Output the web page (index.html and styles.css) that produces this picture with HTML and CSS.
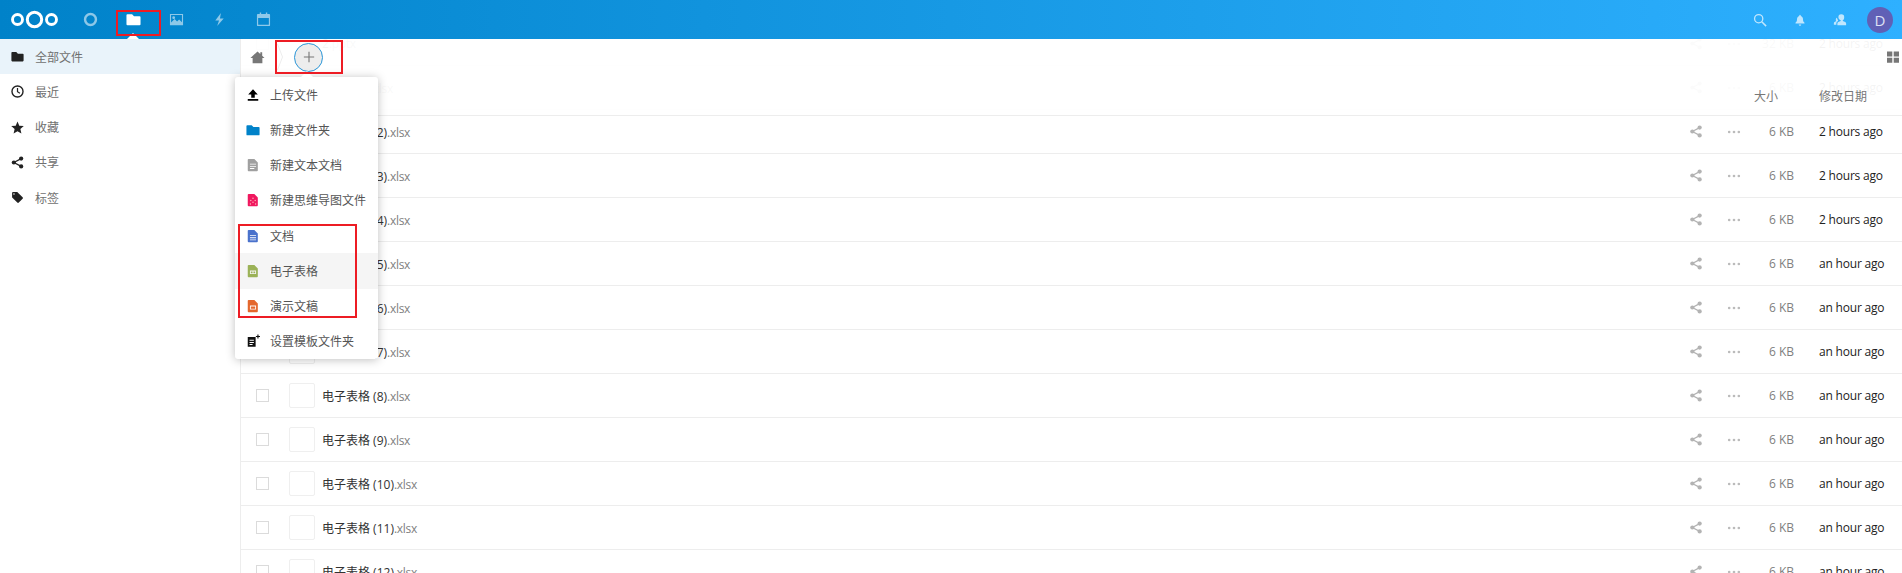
FILE: index.html
```html
<!DOCTYPE html>
<html lang="zh-CN">

<head>
    <meta charset="UTF-8">
    <title>文件</title>
    <link rel="stylesheet" href="styles.css">
</head>

<body>
    <!-- Ikone koje se ponavljaju -->
    <svg class="sprite" aria-hidden="true">
        <symbol id="i-share" viewBox="0 0 16 16">
            <circle cx="3.5" cy="8" r="2.6" />
            <circle cx="12.5" cy="3.2" r="2.6" />
            <circle cx="12.5" cy="12.8" r="2.6" />
            <path d="M3.5 8l9-4.8M3.5 8l9 4.8" fill="none" stroke="currentColor" stroke-width="1.6" />
        </symbol>
        <symbol id="i-dots" viewBox="0 0 16 16">
            <circle cx="2.500" cy="8" r="1.500" />
            <circle cx="8" cy="8" r="1.500" />
            <circle cx="13.500" cy="8" r="1.500" />
        </symbol>
        <symbol id="i-folder" viewBox="0 0 16 16">
            <path d="M1.5 2.5h5l2 2h6a1 1 0 0 1 1 1v7.500a1 1 0 0 1-1 1h-13a1 1 0 0 1-1-1v-9.500a1 1 0 0 1 1-1z" />
        </symbol>
    </svg>

    <header class="topbar">
        <svg class="logo" viewBox="0 0 47 19" width="47" height="19">
            <g fill="none" stroke="#fff">
                <circle cx="6.500" cy="9.500" r="5" stroke-width="2.900" />
                <circle cx="23.500" cy="9.500" r="7.200" stroke-width="3" />
                <circle cx="40.500" cy="9.500" r="5" stroke-width="2.900" />
            </g>
        </svg>
        <nav class="apps">
            <a class="app dim">
                <svg viewBox="0 0 16 16" width="15" height="15"><circle cx="8" cy="8" r="5.800" fill="none" stroke="#fff" stroke-width="2.600" /></svg>
            </a>
            <a class="app active">
                <svg width="15" height="15" fill="#fff"><use href="#i-folder" /></svg>
            </a>
            <a class="app dim">
                <svg viewBox="0 0 16 16" width="15" height="15"><path fill="#fff" fill-rule="evenodd" d="M1 2h14v12H1zM2.200 3.200v8l3.800-3.700 2.600 2.500 2.200-2 3 3V3.200zM5 4.500a1.500 1.500 0 1 1 0 3 1.500 1.500 0 0 1 0-3z" /></svg>
            </a>
            <a class="app dim">
                <svg viewBox="0 0 16 16" width="15" height="15"><path fill="#fff" d="M9.500 1L3.500 9h4L5.500 15l7-8H8.500z" /></svg>
            </a>
            <a class="app dim">
                <svg viewBox="0 0 16 16" width="15" height="15"><path fill="#fff" fill-rule="evenodd" d="M4 .500h1.500V2h5V.500H12V2h2a1 1 0 0 1 1 1v11a1 1 0 0 1-1 1H2a1 1 0 0 1-1-1V3a1 1 0 0 1 1-1h2zM2.300 6.500V13a.7.7 0 0 0 .7.700h10a.7.7 0 0 0 .7-.7V6.500z" /></svg>
            </a>
        </nav>
        <div class="top-right">
            <a class="top-icon">
                <svg viewBox="0 0 16 16" width="14" height="14"><circle cx="6.500" cy="6.500" r="4.700" fill="none" stroke="#fff" stroke-width="1.500" /><path d="M10 10l5 5" stroke="#fff" stroke-width="1.700" /></svg>
            </a>
            <a class="top-icon">
                <svg viewBox="0 0 16 16" width="12" height="12"><path fill="#fff" d="M8 1a1 1 0 0 1 1 1v.600c2 .5 3 2.200 3 4.400 0 2.500.7 3.600 2 4.500v1H2v-1c1.300-.9 2-2 2-4.500 0-2.200 1-3.900 3-4.400V2a1 1 0 0 1 1-1zM6.300 14h3.400a1.700 1.700 0 0 1-3.400 0z" /></svg>
            </a>
            <a class="top-icon">
                <svg viewBox="0 0 16 16" width="14" height="14"><path fill="#fff" d="M9.500 1.500a3.300 3.300 0 0 1 3.300 3.500c0 1.400-.7 2.800-1.600 3.400v.8c2 .5 3.800 1.300 3.800 2.800V14H5v-2c0-1.500 1.800-2.300 3.800-2.800v-.8C7.900 7.800 6.200 6.400 6.200 5a3.300 3.300 0 0 1 3.300-3.500zM1 13.500v-1.800c0-1.200 1.100-1.800 2.700-2.300-.6-.8-.7-2-.2-3 .3-.4.600-.7 1-.9.200 1 .7 2 1.300 2.700v.8C4.500 9.500 3.800 10.500 3.800 12v1.500z" /></svg>
            </a>
            <div class="avatar">D</div>
        </div>
    </header>

    <div class="main">
        <aside class="sidebar">
            <a class="side-item selected">
                <svg width="13" height="13" fill="#222"><use href="#i-folder" /></svg>
                <span>全部文件</span>
            </a>
            <a class="side-item">
                <svg viewBox="0 0 16 16" width="13" height="13"><circle cx="8" cy="8" r="6.800" fill="none" stroke="#222" stroke-width="1.700" /><path d="M8 3.800V8.300l3 1.800" fill="none" stroke="#222" stroke-width="1.500" /></svg>
                <span>最近</span>
            </a>
            <a class="side-item">
                <svg viewBox="0 0 24 24" width="13" height="13"><path fill="#222" d="M12 18.700l7.200 4.300-1.900-8.200L23.600 9.300l-8.300-.7L12 1 8.700 8.600l-8.300.7 6.300 5.500L4.800 23z" /></svg>
                <span>收藏</span>
            </a>
            <a class="side-item">
                <svg class="dark-share" width="13" height="13" fill="#222" color="#222"><use href="#i-share" /></svg>
                <span>共享</span>
            </a>
            <a class="side-item">
                <svg viewBox="0 0 24 24" width="13" height="13"><path fill="#222" d="M21.410 11.580l-9-9C12.050 2.220 11.550 2 11 2H4c-1.100 0-2 .9-2 2v7c0 .55.22 1.050.59 1.420l9 9c.36.36.86.58 1.410.58s1.050-.22 1.410-.59l7-7c.37-.36.59-.86.59-1.410s-.23-1.060-.59-1.420zM5.500 7C4.670 7 4 6.330 4 5.500S4.670 4 5.500 4 7 4.670 7 5.500 6.330 7 5.500 7z" /></svg>
                <span>标签</span>
            </a>
        </aside>

        <section class="files">
            <div class="file-list">
                <div class="file-row"><i class="check"></i><i class="thumb"></i><span class="name">2<em>.pptx</em></span><svg class="share"><use href="#i-share" /></svg><svg class="dots"><use href="#i-dots" /></svg><span class="size">32 KB</span><span class="date">2 hours ago</span></div>
                <div class="file-row"><i class="check"></i><i class="thumb"></i><span class="name">电子表格<em>.xlsx</em></span><svg class="share"><use href="#i-share" /></svg><svg class="dots"><use href="#i-dots" /></svg><span class="size">6 KB</span><span class="date">2 hours ago</span></div>
                <div class="file-row"><i class="check"></i><i class="thumb"></i><span class="name">电子表格 (2)<em>.xlsx</em></span><svg class="share"><use href="#i-share" /></svg><svg class="dots"><use href="#i-dots" /></svg><span class="size">6 KB</span><span class="date">2 hours ago</span></div>
                <div class="file-row"><i class="check"></i><i class="thumb"></i><span class="name">电子表格 (3)<em>.xlsx</em></span><svg class="share"><use href="#i-share" /></svg><svg class="dots"><use href="#i-dots" /></svg><span class="size">6 KB</span><span class="date">2 hours ago</span></div>
                <div class="file-row"><i class="check"></i><i class="thumb"></i><span class="name">电子表格 (4)<em>.xlsx</em></span><svg class="share"><use href="#i-share" /></svg><svg class="dots"><use href="#i-dots" /></svg><span class="size">6 KB</span><span class="date">2 hours ago</span></div>
                <div class="file-row"><i class="check"></i><i class="thumb"></i><span class="name">电子表格 (5)<em>.xlsx</em></span><svg class="share"><use href="#i-share" /></svg><svg class="dots"><use href="#i-dots" /></svg><span class="size">6 KB</span><span class="date">an hour ago</span></div>
                <div class="file-row"><i class="check"></i><i class="thumb"></i><span class="name">电子表格 (6)<em>.xlsx</em></span><svg class="share"><use href="#i-share" /></svg><svg class="dots"><use href="#i-dots" /></svg><span class="size">6 KB</span><span class="date">an hour ago</span></div>
                <div class="file-row"><i class="check"></i><i class="thumb"></i><span class="name">电子表格 (7)<em>.xlsx</em></span><svg class="share"><use href="#i-share" /></svg><svg class="dots"><use href="#i-dots" /></svg><span class="size">6 KB</span><span class="date">an hour ago</span></div>
                <div class="file-row"><i class="check"></i><i class="thumb"></i><span class="name">电子表格 (8)<em>.xlsx</em></span><svg class="share"><use href="#i-share" /></svg><svg class="dots"><use href="#i-dots" /></svg><span class="size">6 KB</span><span class="date">an hour ago</span></div>
                <div class="file-row"><i class="check"></i><i class="thumb"></i><span class="name">电子表格 (9)<em>.xlsx</em></span><svg class="share"><use href="#i-share" /></svg><svg class="dots"><use href="#i-dots" /></svg><span class="size">6 KB</span><span class="date">an hour ago</span></div>
                <div class="file-row"><i class="check"></i><i class="thumb"></i><span class="name">电子表格 (10)<em>.xlsx</em></span><svg class="share"><use href="#i-share" /></svg><svg class="dots"><use href="#i-dots" /></svg><span class="size">6 KB</span><span class="date">an hour ago</span></div>
                <div class="file-row"><i class="check"></i><i class="thumb"></i><span class="name">电子表格 (11)<em>.xlsx</em></span><svg class="share"><use href="#i-share" /></svg><svg class="dots"><use href="#i-dots" /></svg><span class="size">6 KB</span><span class="date">an hour ago</span></div>
                <div class="file-row"><i class="check"></i><i class="thumb"></i><span class="name">电子表格 (12)<em>.xlsx</em></span><svg class="share"><use href="#i-share" /></svg><svg class="dots"><use href="#i-dots" /></svg><span class="size">6 KB</span><span class="date">an hour ago</span></div>
            </div>

            <!-- Prozirna traka preko liste -->
            <div class="files-bar">
                <div class="crumbs">
                    <svg class="home" viewBox="0 0 16 16" width="15" height="15"><path fill="#777" d="M8 1.500L.5 8.500h2.300V14h10.400V8.500h2.300L13 6.200V2.500h-2v1.800z" /></svg>
                    <svg class="crumb-sep" viewBox="0 0 6 28" width="6" height="28"><path d="M.5 1l5 13-5 13" fill="none" stroke="#ededed" /></svg>
                    <div class="add-btn">
                        <svg viewBox="0 0 14 14" width="12" height="12"><path d="M7 1v12M1 7h12" stroke="#777" stroke-width="1.300" /></svg>
                    </div>
                    <svg class="view-toggle" viewBox="0 0 12 12" width="12" height="12"><path fill="#777" d="M0 .500h5.300v5H0zM6.700 .500H12v5H6.700zM0 6.800h5.300v5H0zM6.700 6.800H12v5H6.700z" /></svg>
                </div>
                <div class="list-head">
                    <span class="head-size">大小</span>
                    <span class="head-date">修改日期</span>
                </div>
            </div>

            <!-- Meni za novi fajl -->
            <div class="new-menu">
                <a class="menu-item">
                    <svg viewBox="0 0 16 16" width="14" height="14"><path fill="#000" d="M8 1.500l5.500 6H10v3.500H6V7.500H2.500zM2 12.500h12v2H2z" /></svg>
                    <span>上传文件</span>
                </a>
                <a class="menu-item">
                    <svg width="14" height="14" fill="#0082c9"><use href="#i-folder" /></svg>
                    <span>新建文件夹</span>
                </a>
                <a class="menu-item">
                    <svg viewBox="0 0 16 16" width="14" height="14"><path fill-rule="evenodd" fill="#a0a0a0" d="M3 1h6.500L13.500 5V14a1 1 0 0 1-1 1H3a1 1 0 0 1-1-1V2a1 1 0 0 1 1-1zM4.500 6.500v1h7v-1zM4.500 9v1h7V9zM4.500 11.500v1h5v-1z" /></svg>
                    <span>新建文本文档</span>
                </a>
                <a class="menu-item">
                    <svg viewBox="0 0 16 16" width="14" height="14"><path fill="#f0185f" d="M3 1h6.500L13.500 5V14a1 1 0 0 1-1 1H3a1 1 0 0 1-1-1V2a1 1 0 0 1 1-1z" /><g fill="#fbb"><circle cx="8" cy="6" r=".8" /><circle cx="5.500" cy="8.500" r=".8" /><circle cx="10.500" cy="8.500" r=".8" /><circle cx="8" cy="10.500" r=".8" /><circle cx="5" cy="12.500" r=".8" /><circle cx="11" cy="12.500" r=".8" /></g></svg>
                    <span>新建思维导图文件</span>
                </a>
                <a class="menu-item">
                    <svg viewBox="0 0 16 16" width="14" height="14"><path fill-rule="evenodd" fill="#4a72cc" d="M3 1h6.500L13.500 5V14a1 1 0 0 1-1 1H3a1 1 0 0 1-1-1V2a1 1 0 0 1 1-1zM4.500 7v1h7V7zM4.500 9.500v1h7v-1zM4.500 12v.8h7V12z" /></svg>
                    <span>文档</span>
                </a>
                <a class="menu-item hover">
                    <svg viewBox="0 0 16 16" width="14" height="14"><path fill-rule="evenodd" fill="#9bb257" d="M3 1h6.500L13.500 5V14a1 1 0 0 1-1 1H3a1 1 0 0 1-1-1V2a1 1 0 0 1 1-1zM4.500 7.500v4h7v-4zM5.500 8.500h2v2h-2zM8.500 8.500h2v2h-2z" /></svg>
                    <span>电子表格</span>
                </a>
                <a class="menu-item">
                    <svg viewBox="0 0 16 16" width="14" height="14"><path fill-rule="evenodd" fill="#e4672d" d="M3 1h6.500L13.500 5V14a1 1 0 0 1-1 1H3a1 1 0 0 1-1-1V2a1 1 0 0 1 1-1zM4.500 7.500v4.500h7V7.500zM5.500 8.500h5V11h-5z" /></svg>
                    <span>演示文稿</span>
                </a>
                <a class="menu-item">
                    <svg viewBox="0 0 16 16" width="14" height="14"><path fill-rule="evenodd" fill="#111" d="M2 3.500h9V14.500H2zM4 6.500v1.200h5V6.500zM4 9v1.200h5V9zM4 11.500v1.200h3.500v-1.200zM13 .5h1.300v1.700H16v1.300h-1.700v1.700H13V3.500h-1.700V2.200H13z" /></svg>
                    <span>设置模板文件夹</span>
                </a>
            </div>
        </section>
    </div>

    <!-- Crveni okviri sa snimka ekrana -->
    <div class="mark mark-files"></div>
    <div class="mark mark-add"></div>
    <div class="mark mark-office"></div>
</body>

</html>
```

FILE: styles.css
```css
* {
    box-sizing: border-box;
}

html,
body {
    height: 100%;
}

body {
    font-family: "Open Sans", "Noto Sans CJK SC", sans-serif;
    font-size: 12px;
    margin: 0;
    padding: 0;
    color: #222;
    background-color: #fff;
    overflow: hidden;
}

a {
    color: inherit;
    text-decoration: none;
}

.sprite {
    display: none;
}

.topbar {
    position: relative;
    z-index: 10;
    height: 39px;
    display: flex;
    align-items: center;
    background: linear-gradient(to right, #0082c9, #2eb0ff);
}

.logo {
    margin-left: 11px;
    flex-shrink: 0;
}

.apps {
    display: flex;
    margin-left: 10.4px;
}

.app {
    width: 43.25px;
    height: 39px;
    position: relative;
    display: flex;
    align-items: center;
    justify-content: center;
}

.app.dim {
    opacity: 0.55;
}

.app.active::after {
    content: "";
    position: absolute;
    left: 50%;
    bottom: 0;
    margin-left: -6px;
    border: 6px solid transparent;
    border-top: 0;
    border-bottom-color: #fff;
}

.top-right {
    margin-left: auto;
    display: flex;
    align-items: center;
    padding-right: 9px;
}

.top-icon {
    width: 40px;
    height: 39px;
    display: flex;
    align-items: center;
    justify-content: center;
    opacity: 0.7;
}

.avatar {
    width: 26px;
    height: 26px;
    margin-left: 7px;
    border-radius: 50%;
    background-color: #6060b6;
    color: #dfe0f5;
    font-size: 15px;
    line-height: 26px;
    text-align: center;
}

.main {
    height: calc(100vh - 39px);
    display: flex;
    overflow: hidden;
}

.sidebar {
    width: 241px;
    flex-shrink: 0;
    border-right: 1px solid #ededed;
}

.side-item {
    height: 35.25px;
    display: flex;
    align-items: center;
    padding-left: 11px;
    gap: 11px;
    color: #707070;
}

.side-item.selected {
    background-color: #e9f3fa;
}

.files {
    flex: 1;
    position: relative;
}

.file-list {
    margin-top: -17px;
}

.file-row {
    height: 44px;
    display: flex;
    align-items: center;
    border-bottom: 1px solid #ededed;
    padding-left: 15px;
}

.check {
    width: 13px;
    height: 13px;
    border: 1px solid #dbdbdb;
    flex-shrink: 0;
}

.thumb {
    width: 26px;
    height: 25px;
    margin-left: 20px;
    border: 1px solid #efefef;
    border-radius: 2px;
    flex-shrink: 0;
}

.name {
    flex: 1;
    margin-left: 7px;
    color: #333;
}

.name em {
    font-style: normal;
    color: #808080;
    letter-spacing: -0.3px;
}

.share {
    width: 38px;
    height: 13px;
    fill: #b3b3b3;
    color: #b3b3b3;
}

.dots {
    width: 38px;
    height: 14px;
    fill: #bbb;
}

.size {
    width: 41px;
    text-align: right;
    color: #808080;
}

.date {
    width: 83px;
    margin-left: 25px;
    color: #222;
    letter-spacing: -0.2px;
}

.files-bar {
    position: absolute;
    top: 0;
    left: 0;
    right: 0;
    height: 77px;
    background-color: rgba(255, 255, 255, 0.95);
    border-bottom: 1px solid #ededed;
    display: flex;
    flex-direction: column;
}

.crumbs {
    height: 36px;
    display: flex;
    align-items: center;
    padding-left: 9px;
}

.crumb-sep {
    margin-left: 12px;
}

.add-btn {
    width: 29px;
    height: 29px;
    margin-left: 11px;
    border: 1px solid #2a96d8;
    border-radius: 50%;
    background-color: #ededed;
    display: flex;
    align-items: center;
    justify-content: center;
}

.view-toggle {
    margin-left: auto;
    margin-right: 3px;
}

.list-head {
    flex: 1;
    display: flex;
    align-items: center;
    padding-top: 2px;
    color: #777;
}

.head-size {
    margin-left: auto;
}

.head-date {
    width: 83px;
    margin-left: 41px;
}

.new-menu {
    position: absolute;
    top: 38px;
    left: -6px;
    width: 143px;
    background-color: #fff;
    border-radius: 3px;
    box-shadow: 0 1px 10px rgba(0, 0, 0, 0.25);
    z-index: 5;
}

.new-menu::before {
    content: "";
    position: absolute;
    top: -6px;
    left: 66px;
    border: 6px solid transparent;
    border-top: 0;
    border-bottom-color: #fff;
}

.menu-item {
    height: 35.25px;
    display: flex;
    align-items: center;
    padding-left: 11px;
    gap: 10px;
    color: #555;
    white-space: nowrap;
}

.menu-item.hover {
    background-color: #f5f5f5;
}

.mark {
    position: absolute;
    z-index: 20;
    border: 2px solid #ed1c24;
}

.mark-files {
    left: 116px;
    top: 10px;
    width: 45px;
    height: 26px;
}

.mark-add {
    left: 275px;
    top: 40px;
    width: 68px;
    height: 34px;
}

.mark-office {
    left: 238px;
    top: 224px;
    width: 119px;
    height: 94px;
}
```
